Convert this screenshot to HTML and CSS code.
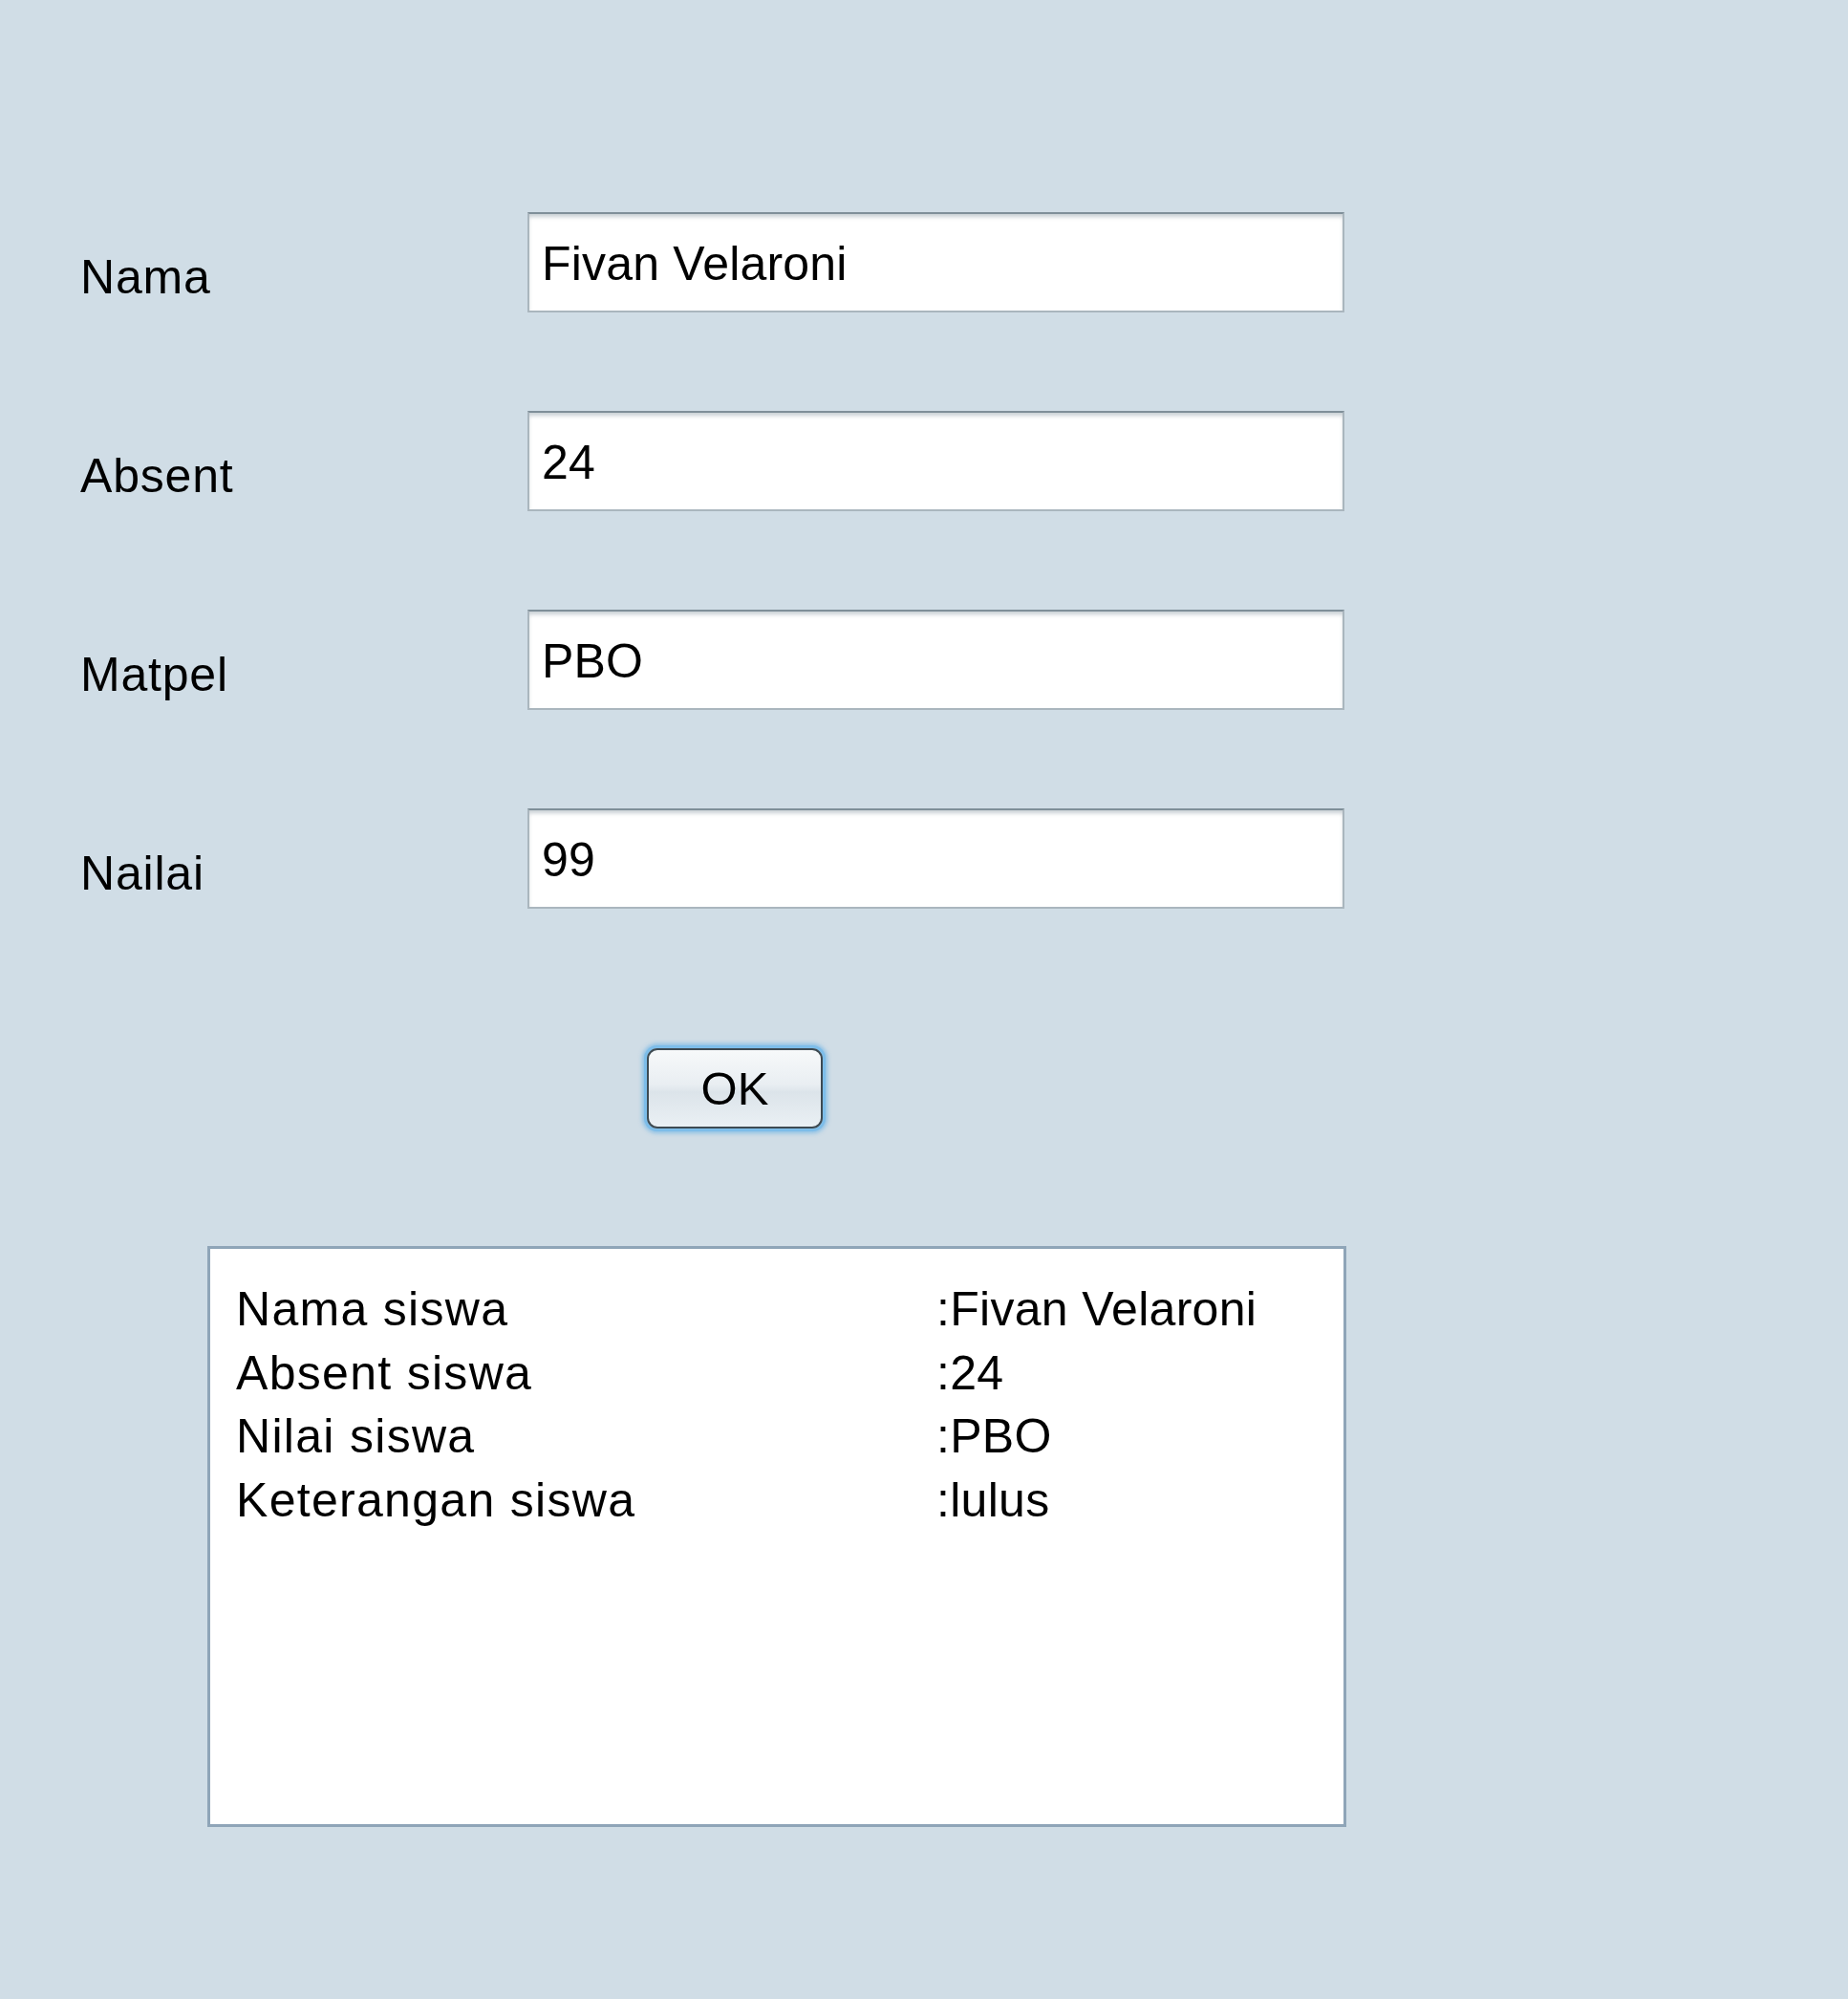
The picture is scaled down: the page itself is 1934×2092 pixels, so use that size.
FILE: index.html
```html
<!DOCTYPE html>
<html lang="id">
<head>
<meta charset="utf-8">
<title>Form Siswa</title>
<link rel="stylesheet" href="styles.css">
</head>
<body>
<main class="form">
  <div class="row">
    <div class="label">Nama</div>
    <div class="field">Fivan Velaroni</div>
  </div>
  <div class="row">
    <div class="label">Absent</div>
    <div class="field">24</div>
  </div>
  <div class="row">
    <div class="label">Matpel</div>
    <div class="field">PBO</div>
  </div>
  <div class="row">
    <div class="label">Nailai</div>
    <div class="field">99</div>
  </div>
  <div class="button-row">
    <button class="ok-button" type="button">OK</button>
  </div>
  <div class="output">
    <div class="out-grid">
      <span class="key">Nama siswa</span><span class="val">:Fivan Velaroni</span>
      <span class="key">Absent siswa</span><span class="val">:24</span>
      <span class="key">Nilai siswa</span><span class="val">:PBO</span>
      <span class="key">Keterangan siswa</span><span class="val">:lulus</span>
    </div>
  </div>
</main>
</body>
</html>
```

FILE: styles.css
```css
html, body {
  margin: 0;
  padding: 0;
  background: #d0dde6;
}
body {
  min-height: 2092px;
  font-family: "Liberation Sans", Arial, sans-serif;
  font-size: 50px;
  color: #000;
}
.form {
  padding-top: 222px;
  padding-left: 84px;
  display: flex;
  flex-direction: column;
}
.row {
  display: flex;
  align-items: flex-start;
  height: 105px;
  margin-bottom: 103px;
}
.label {
  width: 468px;
  padding-top: 38px;
  line-height: 60px;
  letter-spacing: 0.8px;
}
.field {
  box-sizing: border-box;
  width: 855px;
  height: 105px;
  background: #fff;
  border: 2px solid #aab6be;
  border-top-color: #7f8f99;
  box-shadow: inset 0 4px 4px -1px rgba(95, 115, 128, 0.35);
  padding: 22px 0 0 13px;
  line-height: 60px;
  letter-spacing: 0.2px;
}
.button-row {
  margin-top: 44px;
  padding-left: 594px;
  display: flex;
}
.ok-button {
  box-sizing: border-box;
  width: 184px;
  height: 84px;
  margin-top: -1px;
  margin-left: -1px;
  border: 2px solid #3d4a52;
  border-radius: 11px;
  background: linear-gradient(#f7f9fa 0%, #e9eef2 45%, #dce4ea 55%, #eaf0f4 100%);
  box-shadow: 0 0 0 3px #7dbde9, 0 0 4px 5px rgba(110, 180, 230, 0.7);
  font-family: "Liberation Sans", Arial, sans-serif;
  font-size: 49px;
  color: #000;
  padding: 0;
  line-height: 80px;
}
.output {
  box-sizing: border-box;
  margin-top: 123px;
  margin-left: 133px;
  width: 1192px;
  height: 608px;
  background: #fff;
  border: 3px solid #8fa5b8;
  padding: 30px 0 0 27px;
}
.out-grid {
  display: grid;
  grid-template-columns: 733px auto;
  line-height: 66.7px;
}
.key {
  letter-spacing: 1.3px;
}
.val {
  letter-spacing: 0.3px;
}
```
